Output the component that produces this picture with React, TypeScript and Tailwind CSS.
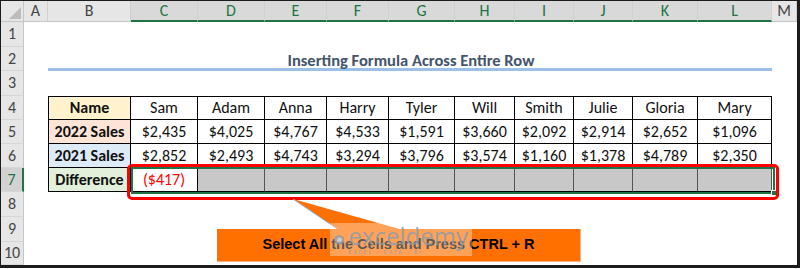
import React from 'react';

const cols = [
  { key: 'A', w: 'w-[24px]' },
  { key: 'B', w: 'w-[83px]' },
  { key: 'C', w: 'w-[67px]' },
  { key: 'D', w: 'w-[67px]' },
  { key: 'E', w: 'w-[62px]' },
  { key: 'F', w: 'w-[62px]' },
  { key: 'G', w: 'w-[66px]' },
  { key: 'H', w: 'w-[60px]' },
  { key: 'I', w: 'w-[59px]' },
  { key: 'J', w: 'w-[59px]' },
  { key: 'K', w: 'w-[65px]' },
  { key: 'L', w: 'w-[74px]' },
  { key: 'M', w: 'flex-1' },
];

const names = ['Sam', 'Adam', 'Anna', 'Harry', 'Tyler', 'Will', 'Smith', 'Julie', 'Gloria', 'Mary'];
const sales2022 = ['$2,435', '$4,025', '$4,767', '$4,533', '$1,591', '$3,660', '$2,092', '$2,914', '$2,652', '$1,096'];
const sales2021 = ['$2,852', '$2,493', '$4,743', '$3,294', '$3,796', '$3,574', '$1,160', '$1,378', '$4,789', '$2,350'];

const labels = [
  { text: 'Name', bg: 'bg-[#fff2cc]' },
  { text: '2022 Sales', bg: 'bg-[#fce4d6]' },
  { text: '2021 Sales', bg: 'bg-[#ddebf7]' },
  { text: 'Difference', bg: 'bg-[#e2efda]' },
];

const rowHeights = ['h-[25px]', 'h-[24px]', 'h-[25px]', 'h-[24px]', 'h-[24px]', 'h-[24px]', 'h-[24px]', 'h-[25px]', 'h-[25px]', 'h-[23px]'];

function RowHeader({ num, h }: { num: number; h: string }) {
  const selected = num === 7;
  return (
    <div
      className={`${h} w-[23px] shrink-0 flex items-center justify-center text-[16px] border-b border-[#d6d6d6] ${
        selected ? 'bg-[#d2d2d2] text-[#217346] border-r-2 border-r-[#217346]' : 'bg-[#e6e6e6] text-[#444] border-r border-r-[#c6c6c6]'
      }`}
    >
      {num}
    </div>
  );
}

function tableCell(row: number, ci: number) {
  // row: 4..7, ci: 1 (B) .. 11 (L)
  const base = 'h-full flex items-center justify-center border-r border-b border-black';
  const top = row === 4 ? ' border-t' : '';
  const left = ci === 1 ? ' border-l' : '';
  if (ci === 1) {
    const l = labels[row - 4];
    return <div className={`${base}${top}${left} ${l.bg} font-bold`}>{l.text}</div>;
  }
  const i = ci - 2;
  if (row === 4) return <div className={`${base}${top}`}>{names[i]}</div>;
  if (row === 5) return <div className={base}>{sales2022[i]}</div>;
  if (row === 6) return <div className={base}>{sales2021[i]}</div>;
  if (i === 0) return <div className={`${base} text-[#ff0000]`}>($417)</div>;
  return <div className={`${base} bg-[#c8c8c8] border-r-[#555]`} />;
}

function SheetRow({ num }: { num: number }) {
  const h = rowHeights[num - 1];
  return (
    <div className={`flex ${h}`}>
      <RowHeader num={num} h={h} />
      {cols.map((c, ci) => {
        let content: React.ReactNode = null;
        if (num === 2 && ci >= 1 && ci <= 11) {
          content = <div className="h-full border-b-[3px] border-[#9bc2e6]" />;
        }
        if (num >= 4 && num <= 7 && ci >= 1 && ci <= 11) {
          content = tableCell(num, ci);
        }
        return (
          <div key={c.key} className={`${c.w} shrink-0 h-full`}>
            {content}
          </div>
        );
      })}
    </div>
  );
}

export default function App() {
  return (
    <div className="w-[800px] h-[269px] bg-white">
      <div
        className="relative w-[800px] h-[268px] overflow-hidden bg-white border-l border-t border-r-[3px] border-b-[3px] border-[#1c1c1c] text-[#111] text-[16px]"
        style={{ fontFamily: 'Carlito, Lato, "Open Sans", sans-serif' }}
      >
        {/* column headers */}
        <div className="flex h-[21px]">
          <div className="w-[23px] h-full bg-[#e6e6e6] border-r border-b border-[#c6c6c6] relative">
            <div className="absolute right-[2px] bottom-[2px] w-0 h-0 border-l-[12px] border-l-transparent border-b-[12px] border-b-[#bdbdbd]" />
          </div>
          {cols.map((c, ci) => {
            const sel = ci >= 2 && ci <= 11;
            return (
              <div
                key={c.key}
                className={`${c.w} shrink-0 h-full flex items-center justify-center text-[16px] border-r border-[#d0d0d0] ${
                  sel ? 'bg-[#d9d9d9] text-[#217346] border-b-2 border-b-[#217346]' : 'bg-[#e6e6e6] text-[#444] border-b border-b-[#c6c6c6]'
                }`}
              >
                {c.key}
              </div>
            );
          })}
        </div>

        {Array.from({ length: 10 }, (_, i) => (
          <SheetRow key={i} num={i + 1} />
        ))}

        {/* title */}
        <div className="absolute left-[48px] w-[724px] top-[47px] h-[24px] flex items-center justify-center font-bold text-[#44546a] text-[16.5px]">
          Inserting Formula Across Entire Row
        </div>

        {/* selection outline */}
        <div className="absolute left-[130px] top-[166px] w-[644px] h-[27px] border-2 border-[#217346]" />
        <div className="absolute left-[770px] top-[189px] w-[6px] h-[6px] bg-[#217346] border border-white" />

        {/* red highlight */}
        <div className="absolute left-[126px] top-[163px] w-[652px] h-[36px] border-[3px] border-[#ff0000] rounded-[5px]" />

        {/* callout */}
        <svg className="absolute left-0 top-0" width="800" height="269">
          <polygon points="292,198 338,229 402,229" fill="#ff7000" />
          <line x1="292" y1="198" x2="338" y2="229" stroke="#9aa8b8" strokeWidth="1" />
        </svg>
        <div
          className="absolute left-[216px] top-[228px] w-[364px] h-[33px] bg-[#ff7000] border-r border-b border-[#ffb07a] flex items-center justify-center font-bold text-[14.5px] text-black"
          style={{ fontFamily: '"Liberation Sans", Arial, sans-serif' }}
        >
          Select All the Cells and Press CTRL + R
        </div>

        {/* watermark */}
        <div className="absolute left-[329px] top-[222px] w-[142px] h-[33px] bg-white/35 flex items-center gap-[4px] px-[4px]">
          <svg width="22" height="24" viewBox="0 0 22 24">
            <polygon points="11,1 21,6.5 21,17.5 11,23 1,17.5 1,6.5" fill="#8e9aa8" opacity="0.75" />
            <polygon points="11,6 16,9 16,15 11,18 6,15 6,9" fill="#fff" opacity="0.5" />
          </svg>
          <div className="flex flex-col leading-none">
            <span className="text-[24px] text-[#8e9aa8]/85" style={{ fontFamily: '"Open Sans", sans-serif' }}>
              exceldemy
            </span>
            <span className="text-[6px] tracking-[2px] text-[#8e9aa8]/85 mt-[1px]">EXCEL · DATA · BI</span>
          </div>
        </div>
      </div>
    </div>
  );
}
